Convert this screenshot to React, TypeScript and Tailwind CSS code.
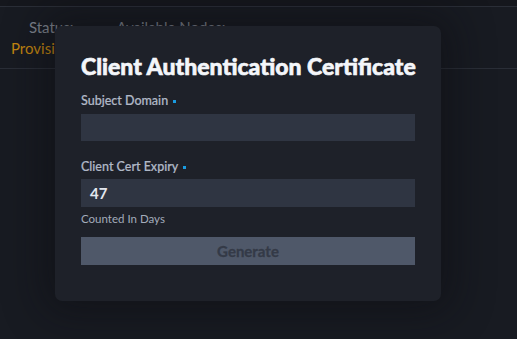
import React from "react";

export default function App() {
  return (
    <div
      className="relative w-[517px] h-[339px] overflow-hidden bg-[#181b22] text-white"
      style={{ fontFamily: "Lato, 'Noto Sans', sans-serif" }}
    >
      {/* page behind the dialog */}
      <div className="h-[7px] bg-[#15171d] border-b border-[#2a2e37]" />
      <div className="flex h-[62px] border-b border-[#2a2e37] px-[11px] pt-[10px] gap-[25px]">
        <div className="flex flex-col items-center">
          <span className="text-[15px] leading-[20px] text-[#7d828c]">Status:</span>
          <span className="text-[15px] leading-[22px] text-[#c4860f]">Provisioning</span>
        </div>
        <div className="flex flex-col items-center">
          <span className="text-[15px] leading-[20px] text-[#7d828c]">Available Nodes:</span>
          <span className="text-[15px] leading-[22px] text-[#c5c9d1]">3</span>
        </div>
      </div>

      {/* dialog */}
      <div className="absolute left-[55px] top-[26px] w-[386px] h-[275px] rounded-[7px] bg-[#1e2129] shadow-[0_0_40px_12px_rgba(10,12,16,0.45)] px-[26px] pt-[26px]">
        <h2 className="text-[23px] leading-[28px] font-black text-[#f4f6fa] whitespace-nowrap [-webkit-text-stroke:0.6px_#f4f6fa]">
          Client Authentication Certificate
        </h2>

        <label className="mt-[12px] flex items-center gap-[5px] text-[12.5px] leading-[18px] font-medium text-[#b0b8c6] [-webkit-text-stroke:0.2px_#b0b8c6]">
          Subject Domain
          <span className="w-[3px] h-[3px] bg-[#1a9be0]" />
        </label>
        <div className="mt-[4px] h-[27px] bg-[#2f3542]" />

        <label className="mt-[17px] flex items-center gap-[5px] text-[12.5px] leading-[18px] font-medium text-[#b0b8c6] [-webkit-text-stroke:0.2px_#b0b8c6]">
          Client Cert Expiry
          <span className="w-[3px] h-[3px] bg-[#1a9be0]" />
        </label>
        <div className="mt-[3px] h-[28px] bg-[#2f3542] flex items-center px-[9px] text-[15px] font-bold text-[#e3e7ee]">
          47
        </div>
        <div className="mt-[4px] text-[11.5px] leading-[16px] text-[#a3abba]">Counted In Days</div>

        <button className="mt-[10px] w-full h-[28px] bg-[#4f5869] text-[15px] font-bold text-[#343a47] [-webkit-text-stroke:0.3px_#343a47]">
          Generate
        </button>
      </div>
    </div>
  );
}
